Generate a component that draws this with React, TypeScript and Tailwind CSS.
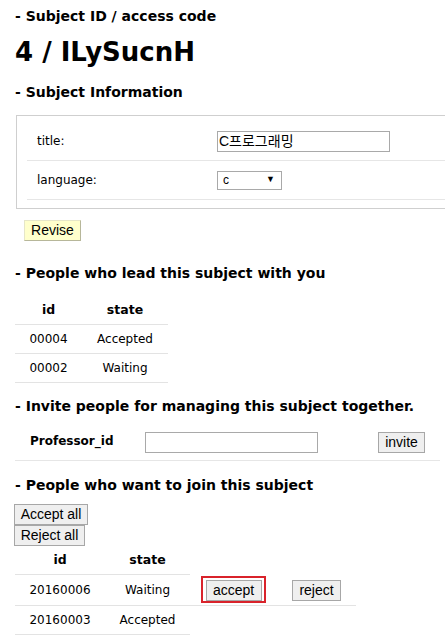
const verdana = "font-['DejaVu_Sans',Verdana,sans-serif]";
const arial = "font-['Liberation_Sans',Arial,'Noto_Sans_CJK_KR',sans-serif]";

function Heading({ children, className = "" }: { children: string; className?: string }) {
  return (
    <h2 className={`flex h-[32px] items-center whitespace-nowrap pl-[15px] text-[14px] font-bold text-black ${className}`}>
      - {children}
    </h2>
  );
}

function Btn({ children, className = "" }: { children: string; className?: string }) {
  return (
    <button
      className={`${arial} flex h-[21px] items-center justify-center whitespace-nowrap border border-[#a7a7a7] bg-[#efefef] px-[3px] text-[14px] text-black ${className}`}
    >
      {children}
    </button>
  );
}

const cell = "flex h-full items-center justify-center border-b border-[#e3e3e3]";

const leaders = [
  { id: "00004", state: "Accepted" },
  { id: "00002", state: "Waiting" },
];

export default function App() {
  return (
    <div className={`${verdana} h-[636px] w-[445px] overflow-hidden bg-white text-black`}>
      <Heading className="h-[26px] text-[14.8px]">Subject ID / access code</Heading>
      <div className="flex h-[41px] items-center pl-[15px] text-[26px] font-bold">4 / ILySucnH</div>
      <Heading className="h-[38px]">Subject Information</Heading>

      <div className="ml-[16px] mt-[4px] w-[460px] border border-[#cfcfcf] px-[10px] pb-[8px] pt-[6px]">
        <div className="flex h-[39px] items-center border-b border-[#e6e6e6] text-[12px]">
          <span className="w-[190px] pl-[10px]">title:</span>
          <input
            readOnly
            value="C프로그래밍"
            className={`${arial} h-[21px] w-[173px] border border-[#a9a9a9] px-[1px] text-[14px] outline-none`}
          />
        </div>
        <div className="flex h-[39px] items-center border-b border-[#e6e6e6] text-[12px]">
          <span className="w-[190px] pl-[10px]">language:</span>
          <div className={`${arial} flex h-[19px] w-[65px] items-center justify-between border border-[#a9a9a9] pl-[5px] pr-[6px] text-[12px]`}>
            <span>c</span>
            <span className="text-[9px]">▼</span>
          </div>
        </div>
      </div>

      <button
        className={`${arial} ml-[24px] mt-[11px] flex h-[21px] w-[57px] items-center justify-center border border-[#e6e6c8] border-b-[#b7b79a] border-r-[#b7b79a] bg-[#ffffcc] text-[14px]`}
      >
        Revise
      </button>

      <Heading className="mt-[16px]">People who lead this subject with you</Heading>
      <div className="ml-[15px] mt-[7px] text-[12px]">
        <div className="flex h-[29px] text-[12.5px] font-bold">
          <div className={`${cell} w-[67px]`}>id</div>
          <div className={`${cell} w-[86px]`}>state</div>
        </div>
        {leaders.map((r) => (
          <div key={r.id} className="flex h-[29px]">
            <div className={`${cell} w-[67px]`}>{r.id}</div>
            <div className={`${cell} w-[86px]`}>{r.state}</div>
          </div>
        ))}
      </div>

      <Heading className="mt-[7px]">Invite people for managing this subject together.</Heading>
      <div className="ml-[15px] flex h-[39px] w-[425px] items-center border-b border-[#e6e6e6]">
        <span className="w-[130px] pl-[15px] text-[12px] font-bold">Professor_id</span>
        <input className="mt-[3px] h-[21px] w-[173px] border border-[#a9a9a9] outline-none" />
        <Btn className="ml-[60px] mt-[3px] w-[47px]">invite</Btn>
      </div>

      <Heading className="mt-[8px]">People who want to join this subject</Heading>
      <div className="ml-[14px] mt-[3px] flex flex-col items-start">
        <Btn className="w-[74px]">Accept all</Btn>
        <Btn className="w-[71px]">Reject all</Btn>
      </div>
      <div className="ml-[15px] text-[12px]">
        <div className="flex h-[29px] text-[12.5px] font-bold">
          <div className={`${cell} w-[90px]`}>id</div>
          <div className={`${cell} w-[85px]`}>state</div>
        </div>
        <div className="flex h-[31px]">
          <div className={`${cell} w-[90px]`}>20160006</div>
          <div className={`${cell} w-[85px]`}>Waiting</div>
          <div className={`${cell} w-[87px]`}>
            <div className="relative">
              <Btn className="w-[56px]">accept</Btn>
              <span className="pointer-events-none absolute -bottom-[2px] -left-[5px] -right-[4px] -top-[4px] border-[2px] border-[#d9232b]" />
            </div>
          </div>
          <div className={`${cell} w-[79px]`}>
            <Btn className="w-[49px]">reject</Btn>
          </div>
        </div>
        <div className="flex h-[29px]">
          <div className={`${cell} w-[90px]`}>20160003</div>
          <div className={`${cell} w-[85px]`}>Accepted</div>
        </div>
      </div>
    </div>
  );
}
